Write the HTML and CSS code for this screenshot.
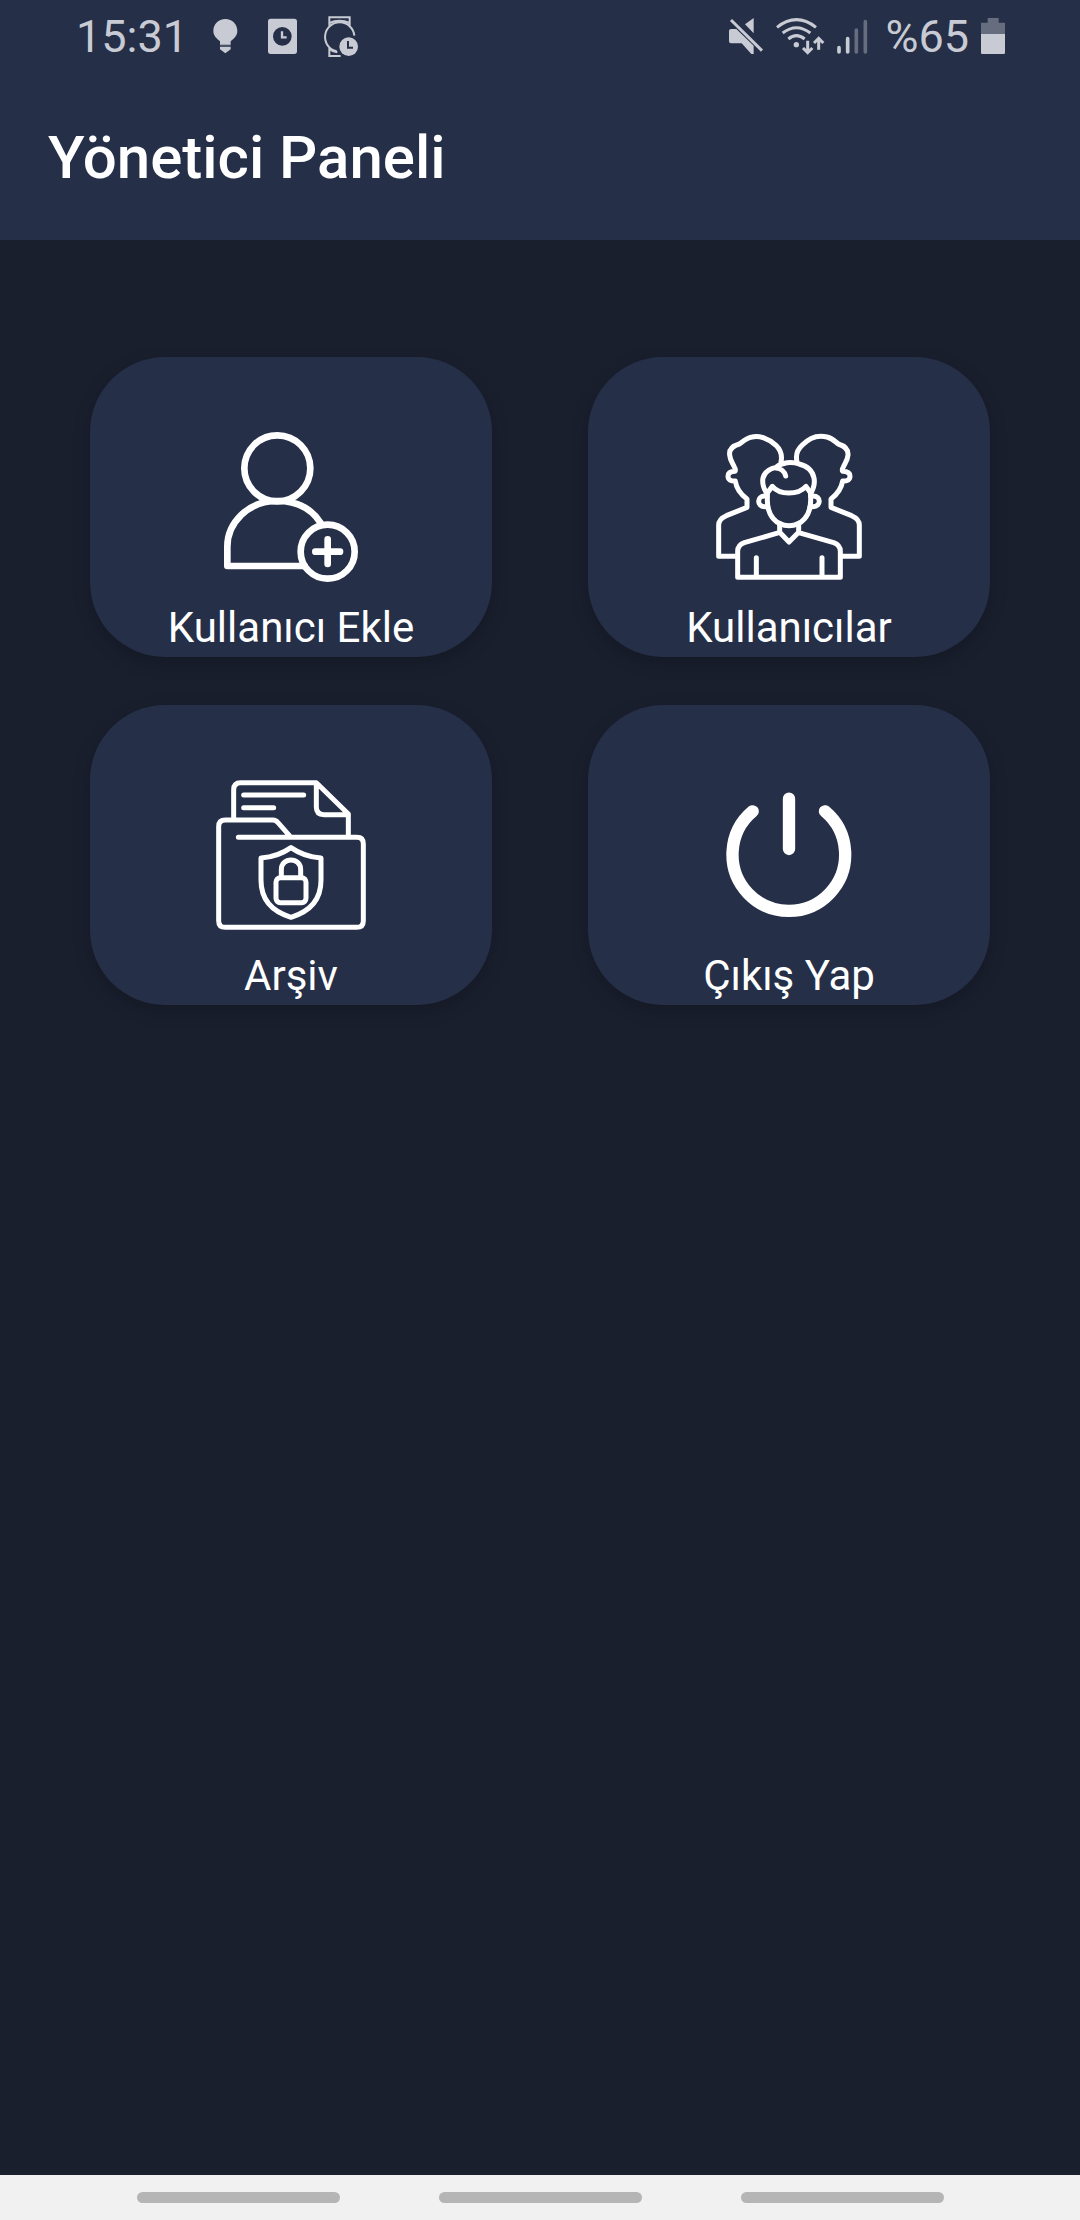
FILE: index.html
```html
<!DOCTYPE html>
<html lang="tr">
<head>
<meta charset="utf-8">
<meta name="viewport" content="width=device-width, initial-scale=1">
<title>Yönetici Paneli</title>
<link rel="stylesheet" href="styles.css">
</head>
<body>
<header class="top">
  <div class="status">
    <div class="status-left">
      <span>15:31</span>
      <svg class="w33" viewBox="456 48 99 126" aria-hidden="true">
        <path d="M499 57C478 57 463 73 463 93C463 107 473 116 483 124V134H515V124C525 116 535 107 535 93C535 73 520 57 499 57ZM483 141H515V148L499 160L483 148Z" fill="currentColor"/>
        <path d="M483 138H515" stroke="currentColor" stroke-width="3" opacity=".5"/>
      </svg>
      <svg class="w33" viewBox="624 48 99 126" aria-hidden="true">
        <rect x="627" y="56" width="87" height="106" rx="8" fill="currentColor"/>
        <circle class="cut" cx="670" cy="109" r="28"/>
        <path d="M669 94V112H683" fill="none" stroke="currentColor" stroke-width="7"/>
      </svg>
      <svg class="w35" viewBox="792 48 105 126" aria-hidden="true">
        <g fill="none" stroke="currentColor" stroke-width="6">
          <path d="M811 77V52H872V77M811 141V168H845M833 154A44 44 0 1 1 886 107"/>
          <path d="M811 69Q841 55 872 69M811 148Q824 155 835 157"/>
        </g>
        <circle cx="869" cy="140" r="28" fill="currentColor"/>
        <path class="cut-line" d="M867 123V143H882"/>
      </svg>
    </div>
    <div class="status-right">
      <svg class="w35" viewBox="57 48 105 126" aria-hidden="true">
        <path d="M131 54V100L105 73ZM63 87H79L131 137V162H124L95 130H63Q57 130 57 124V93Q57 87 63 87Z" fill="currentColor"/>
        <path d="M63 60L156 152" fill="none" stroke="currentColor" stroke-width="9"/>
      </svg>
      <svg class="w49" viewBox="198 48 147 126" aria-hidden="true">
        <g fill="none" stroke="currentColor" stroke-width="9">
          <path d="M201 82Q259 36 318 82M218 99Q259 67 301 99M235 117Q259 97 284 117"/>
          <path d="M293 122V156M279 144L293 158L307 144M326 149V116M312 129L326 115L340 129"/>
        </g>
        <circle cx="259" cy="134" r="8" fill="currentColor"/>
      </svg>
      <svg class="w36" viewBox="381 48 108 126" aria-hidden="true">
        <g fill="none" stroke="currentColor" stroke-width="11" stroke-linecap="round">
          <path d="M387 143V156M413 116V156"/>
          <path d="M439 90V156M466 65V156" opacity=".4"/>
        </g>
      </svg>
      <span>%65</span>
      <svg class="w25" viewBox="813 48 75 126" aria-hidden="true">
        <path d="M833 54H866V68H885V102H813V68H833Z" fill="currentColor" opacity=".4"/>
        <path d="M813 102H885V158Q885 162 881 162H817Q813 162 813 158Z" fill="currentColor"/>
      </svg>
    </div>
  </div>
  <h1 class="title">Yönetici Paneli</h1>
</header>
<main class="grid">
  <button class="card" type="button">
    <svg class="icon" viewBox="18 36 450 450" aria-hidden="true">
      <g stroke-width="20">
        <circle cx="202" cy="145" r="99"/>
        <path d="M332 309C305 266 260 243 202 243C112 243 52 310 52 380V438H284"/>
        <circle cx="353" cy="395" r="81"/>
        <path d="M353 358V432M316 395H390"/>
      </g>
    </svg>
    <span class="label">Kullanıcı Ekle</span>
  </button>
  <button class="card" type="button">
    <svg class="icon" viewBox="27 36 450 450" aria-hidden="true">
      <g stroke-width="15">
        <path d="M228 126C232 108 228 91 213 76C190 55 162 46 141 51C124 54 113 65 103 72C83 78 72 90 74 105C75 121 83 130 88 141Q93 149 90 154C76 154 69 160 69 169C69 179 78 184 91 183C94 206 106 222 126 237V262L64 287C48 294 41 302 41 315V409H94"/>
        <path d="M276 126C272 108 274 91 291 76C316 50 343 45 366 51C382 55 391 65 400 72C420 78 430 90 429 105C428 121 420 130 415 141Q410 149 413 154C428 154 435 160 435 169C435 179 426 184 413 183C409 206 398 222 378 237V262L440 287C456 294 463 302 463 315V409H409"/>
        <path d="M186 221C176 206 170 194 174 174C180 152 198 145 213 142C230 127 260 123 282 132C307 138 323 154 327 174C331 193 325 207 317 221"/>
        <path d="M213 144C227 145 239 155 242 168"/>
        <path d="M187 219V241C187 286 213 317 252 317C291 317 317 286 317 241V219L303 199C279 226 223 226 202 199L187 219"/>
        <path d="M186 228H179C155 228 155 260 179 260H188M317 228H324C349 228 349 260 324 260H315"/>
        <path d="M224 310V337L252 366L281 337V310M222 338L118 368Q98 375 98 394V472H406V394Q406 375 386 368L281 338"/>
        <path d="M154 413V467M351 413V467"/>
      </g>
    </svg>
    <span class="label">Kullanıcılar</span>
  </button>
  <button class="card" type="button">
    <svg class="icon" viewBox="33 30 450 450" aria-hidden="true">
      <g stroke-width="15">
        <path d="M86 144V59Q86 38 107 38H334L430 132V196M334 42V111Q334 134 357 134H430"/>
        <path d="M116 75H296M116 113H206"/>
        <path d="M100 202H456Q475 202 475 222V452Q475 472 455 472H61Q41 472 41 452V170Q41 150 61 150H204Q213 150 219 158L256 200"/>
        <path d="M258 233Q298 261 348 264V331C348 392 311 426 258 442C205 426 168 392 168 331V264Q218 261 258 233Z"/>
        <rect x="213" y="323" width="90" height="75" rx="13"/>
        <path d="M229 321V299C229 260 287 260 287 299V321"/>
      </g>
    </svg>
    <span class="label">Arşiv</span>
  </button>
  <button class="card" type="button">
    <svg class="icon" viewBox="12 30 450 450" aria-hidden="true">
      <g stroke-width="37">
        <path d="M237 86V237M128 124A169 169 0 1 0 345 124"/>
      </g>
    </svg>
    <span class="label">Çıkış Yap</span>
  </button>
</main>
<nav class="nav" aria-label="Sistem gezinmesi">
  <button class="pill" type="button" aria-label="Son uygulamalar"></button>
  <button class="pill" type="button" aria-label="Ana ekran"></button>
  <button class="pill" type="button" aria-label="Geri"></button>
</nav>
</body>
</html>
```
FILE: styles.css
```css
* {
  box-sizing: border-box;
}

body {
  margin: 0;
  min-height: 100vh;
  display: flex;
  flex-direction: column;
  background: #1a1f2e;
  color: #fff;
  font-family: Roboto, "Noto Sans", sans-serif;
}

button {
  border: 0;
  margin: 0;
  padding: 0;
  color: inherit;
  font: inherit;
}

.top {
  background: #252f48;
}

.status {
  display: flex;
  justify-content: space-between;
  height: 72px;
  padding: 0 74px 0 76px;
  color: #c8cbd3;
  font-size: 45px;
  line-height: 74px;
}

.status-left,
.status-right {
  display: flex;
}

.status-left {
  gap: 23px;
}

.status-right {
  gap: 12px;
}

.status svg {
  height: 42px;
  margin-top: 16px;
}

.w25 { width: 25px; }
.w33 { width: 33px; }
.w35 { width: 35px; }
.w36 { width: 36px; }
.w49 { width: 49px; }

.cut {
  fill: #252f48;
}

.cut-line {
  fill: none;
  stroke: #252f48;
  stroke-width: 6;
}

.title {
  margin: 0;
  padding: 50px 48px 46px;
  font-size: 60px;
  font-weight: 500;
  line-height: 72px;
}

.grid {
  flex: 1;
  display: grid;
  grid-template-columns: 1fr 1fr;
  align-content: start;
  gap: 48px 96px;
  padding: 117px 90px 48px;
}

.card {
  display: flex;
  flex-direction: column;
  align-items: center;
  gap: 21px;
  padding: 75px 0 4px;
  border-radius: 75px;
  background: #252f48;
  box-shadow: 0 6px 18px rgba(0, 0, 0, 0.2);
}

.icon {
  width: 150px;
  height: 150px;
  fill: none;
  stroke: #fff;
  stroke-linecap: round;
  stroke-linejoin: round;
}

.label {
  font-size: 42px;
  line-height: 50px;
}

.nav {
  display: flex;
  justify-content: center;
  align-items: center;
  gap: 99px;
  height: 45px;
  background: #f1f1f1;
}

.pill {
  width: 203px;
  height: 11px;
  border-radius: 6px;
  background: #b5b5b5;
}
```
